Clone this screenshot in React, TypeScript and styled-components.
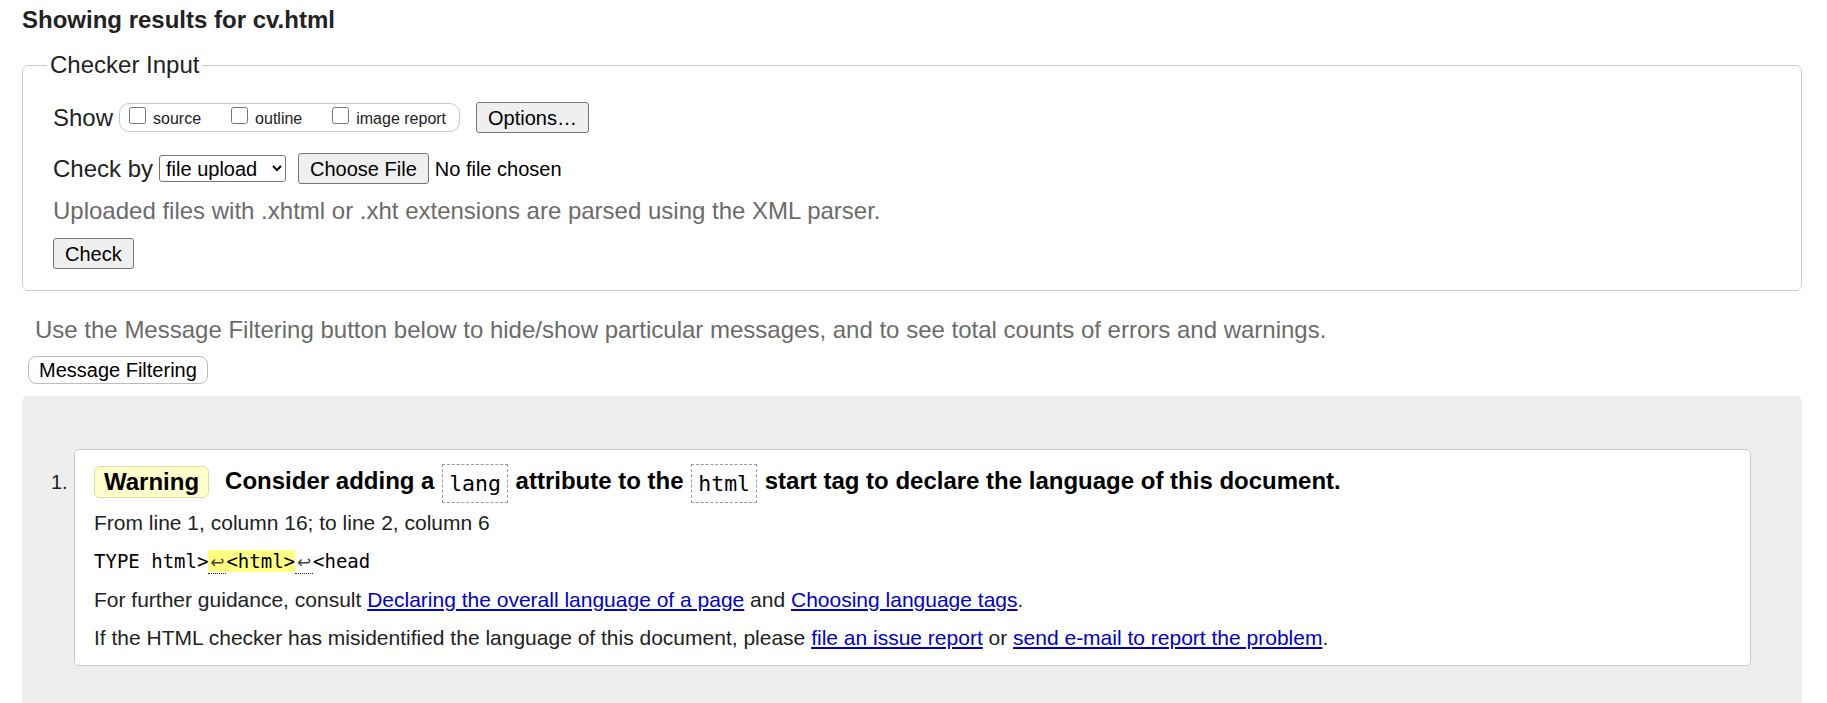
import React from "react";
import styled, { createGlobalStyle } from "styled-components";

const GlobalStyle = createGlobalStyle`
  html, body { margin: 0; padding: 0; background: #fff; }
  body {
    font-family: "Liberation Sans", Arial, sans-serif;
    color: #222;
  }
  * { box-sizing: border-box; }
`;

const Page = styled.main`
  padding: 0 25px 40px 22px;
`;

const Heading = styled.h2`
  margin: 6px 0 0;
  font-size: 24px;
  line-height: 28px;
  font-weight: bold;
  color: #222;
`;

const Fieldset = styled.fieldset`
  margin: 17px 0 0;
  padding: 23px 30px 21px;
  border: 1px solid #ccc;
  border-radius: 6px;
  min-width: 0;
`;

const Legend = styled.legend`
  font-size: 24px;
  line-height: 28px;
  padding: 0 3px;
  margin-left: -6px;
  color: #222;
`;

const FieldBody = styled.div`
  display: flex;
  flex-direction: column;
  align-items: flex-start;
`;

const Row = styled.div<{ $top?: number }>`
  display: flex;
  align-items: center;
  height: 31px;
  margin-top: ${(p) => p.$top ?? 0}px;
  font-size: 24px;
  line-height: 28px;
  color: #222;
`;

const RowLabel = styled.span`
  margin-right: 6px;
`;

const OptionGroup = styled.div`
  display: inline-flex;
  align-items: center;
  gap: 30px;
  height: 29px;
  padding: 0 13px 0 9px;
  border: 1px solid #c8c8c8;
  border-radius: 10px;
  margin-right: 16px;
`;

const OptionLabel = styled.label`
  display: inline-flex;
  align-items: baseline;
  gap: 7px;
  font-size: 16px;
  line-height: 18px;
  color: #222;
`;

const Checkbox = styled.input`
  width: 17px;
  height: 17px;
  margin: 0;
`;

const Button = styled.button`
  height: 31px;
  padding: 0 11px;
  font-family: "Liberation Sans", Arial, sans-serif;
  font-size: 20px;
  line-height: 24px;
  color: #000;
  background: #efefef;
  border: 1px solid #767676;
  border-radius: 3px;
`;

const Select = styled.select`
  width: 127px;
  height: 27px;
  margin-right: 12px;
  padding: 0 0 0 2px;
  font-family: "Liberation Sans", Arial, sans-serif;
  font-size: 20px;
  color: #000;
  background: #fff;
  border: 1px solid #767676;
  border-radius: 3px;
`;

const FileStatus = styled.span`
  margin-left: 6px;
  font-size: 20px;
  color: #000;
`;

const Hint = styled.p<{ $indent?: number; $top: number }>`
  margin: ${(p) => p.$top}px 0 0 ${(p) => p.$indent ?? 0}px;
  font-size: 24px;
  line-height: 28px;
  color: #6b6b6b;
`;

const CheckButton = styled(Button)`
  margin-top: 13px;
`;

const FilterButton = styled.button`
  display: block;
  height: 28px;
  margin: 12px 0 0 6px;
  padding: 0 10px;
  font-family: "Liberation Sans", Arial, sans-serif;
  font-size: 20px;
  line-height: 24px;
  color: #000;
  background: #fff;
  border: 1px solid #bdbdbd;
  border-radius: 8px;
`;

const Results = styled.ol`
  list-style: none;
  margin: 12px 0 0;
  padding: 53px 51px 80px 29px;
  background: #eee;
  border-radius: 6px 6px 0 0;
`;

const Item = styled.li`
  display: flex;
  align-items: flex-start;
`;

const ItemNumber = styled.span`
  width: 23px;
  flex: none;
  margin-top: 21px;
  font-size: 20px;
  line-height: 24px;
  color: #222;
`;

const Card = styled.div`
  flex: 1;
  background: #fff;
  border: 1px solid #ccc;
  border-radius: 5px;
  padding: 12px 19px 15px;
`;

const TitleRow = styled.div`
  display: flex;
  align-items: center;
  height: 40px;
  margin-bottom: 9px;
`;

const Badge = styled.strong`
  display: inline-flex;
  align-items: center;
  height: 32px;
  padding: 0 9px;
  font-size: 24px;
  font-weight: bold;
  color: #000;
  background: #ffffcc;
  border: 1px solid #e0dca4;
  border-radius: 6px;
`;

const TitleText = styled.span`
  margin-left: 16px;
  font-size: 24px;
  line-height: 40px;
  font-weight: bold;
  color: #000;
  white-space: nowrap;
`;

const CodeBox = styled.code`
  display: inline-block;
  vertical-align: middle;
  margin: 0 1px;
  padding: 6px 6px;
  font-family: "DejaVu Sans Mono", "Liberation Mono", monospace;
  font-weight: normal;
  font-size: 21.5px;
  line-height: 25px;
  color: #000;
  background: #fff;
  border: 1px dashed #999;
`;

const Detail = styled.p<{ $top?: number }>`
  margin: ${(p) => p.$top ?? 0}px 0 0;
  font-size: 21px;
  line-height: 24px;
  color: #222;
`;

const Extract = styled.code`
  display: block;
  margin-top: 14px;
  font-family: "DejaVu Sans Mono", "Liberation Mono", monospace;
  font-size: 19px;
  line-height: 24px;
  color: #000;
  white-space: pre;
`;

const Highlight = styled.b`
  font-weight: normal;
  background: #ffff80;
`;

const BreakMark = styled.span`
  display: inline-block;
  width: 18px;
  text-align: center;
  font-family: "DejaVu Sans", sans-serif;
  font-size: 17px;
  color: #444;
  border-bottom: 1px dotted #222;
  line-height: 22px;
`;

const Link = styled.a`
  color: #0000cc;
  text-decoration: underline;
`;

export default function App() {
  return (
    <>
      <GlobalStyle />
      <Page>
        <Heading>Showing results for cv.html</Heading>
        <Fieldset>
          <Legend>Checker Input</Legend>
          <FieldBody>
            <Row>
              <RowLabel>Show</RowLabel>
              <OptionGroup>
                <OptionLabel>
                  <Checkbox type="checkbox" />
                  source
                </OptionLabel>
                <OptionLabel>
                  <Checkbox type="checkbox" />
                  outline
                </OptionLabel>
                <OptionLabel>
                  <Checkbox type="checkbox" />
                  image report
                </OptionLabel>
              </OptionGroup>
              <Button type="button">Options…</Button>
            </Row>
            <Row $top={20}>
              <RowLabel>Check by</RowLabel>
              <Select defaultValue="file">
                <option value="file">file upload</option>
              </Select>
              <Button type="button">Choose File</Button>
              <FileStatus>No file chosen</FileStatus>
            </Row>
            <Hint $top={13}>
              Uploaded files with .xhtml or .xht extensions are parsed using the XML parser.
            </Hint>
            <CheckButton type="button">Check</CheckButton>
          </FieldBody>
        </Fieldset>
        <Hint $top={25} $indent={13}>
          Use the Message Filtering button below to hide/show particular messages, and to see total counts of errors and warnings.
        </Hint>
        <FilterButton type="button">Message Filtering</FilterButton>
        <Results>
          <Item>
            <ItemNumber>1.</ItemNumber>
            <Card>
              <TitleRow>
                <Badge>Warning</Badge>
                <TitleText>
                  Consider adding a <CodeBox>lang</CodeBox> attribute to the <CodeBox>html</CodeBox> start tag to declare the language of this document.
                </TitleText>
              </TitleRow>
              <Detail>From line 1, column 16; to line 2, column 6</Detail>
              <Extract>
                {"TYPE html>"}
                <Highlight>
                  <BreakMark>↩</BreakMark>
                  {"<html>"}
                </Highlight>
                <BreakMark>↩</BreakMark>
                {"<head"}
              </Extract>
              <Detail $top={14}>
                For further guidance, consult <Link href="#">Declaring the overall language of a page</Link> and{" "}
                <Link href="#">Choosing language tags</Link>.
              </Detail>
              <Detail $top={14}>
                If the HTML checker has misidentified the language of this document, please{" "}
                <Link href="#">file an issue report</Link> or <Link href="#">send e-mail to report the problem</Link>.
              </Detail>
            </Card>
          </Item>
        </Results>
      </Page>
    </>
  );
}
